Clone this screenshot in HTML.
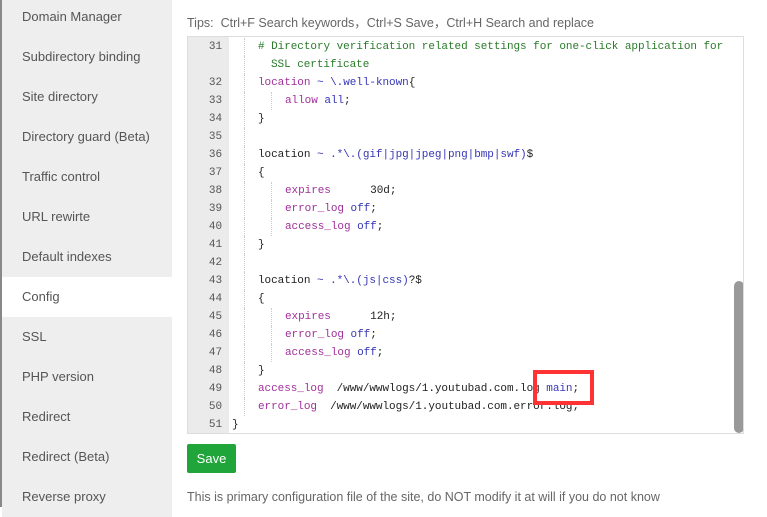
<!DOCTYPE html>
<html><head><style>
*{margin:0;padding:0;box-sizing:border-box}
body{width:767px;height:507px;overflow:hidden;background:#fff;font-family:"Liberation Sans",sans-serif;position:relative}
.edge{position:absolute;left:0;top:0;width:2px;height:507px;background:#888}
.side{position:absolute;left:2px;top:-3px;width:170px}
.side div{height:40px;line-height:40px;padding-left:20px;font-size:13px;color:#555;background:#eeeeee}
.side div.act{background:#fff}
.tips{position:absolute;left:187px;top:12px;font-size:12.5px;color:#666}
.ed{position:absolute;left:187px;top:36px;width:557px;height:398px;border:1px solid #ddd;overflow:hidden;background:#fff}
.gut{position:absolute;left:0;top:0;width:41px;height:100%;background:#ebebeb}
.code{position:absolute;left:0;top:1px;width:100%;font-family:"Liberation Mono",monospace;font-size:11px;letter-spacing:-0.05px}
.r{height:18px;line-height:18px;position:relative;white-space:pre}
.n{position:absolute;left:0;width:34px;text-align:right;color:#555}
.t{position:absolute;left:44px;color:#222}
.g{position:absolute;top:0;height:18px;border-left:1px dotted #ccc}
.k{color:#a0309a}.v{color:#3636b8}.c{color:#2a7b2a}
.sb{position:absolute;left:546px;top:244px;width:10px;height:152px;background:#999;border-radius:5px}
.box{position:absolute;left:533px;top:370px;width:61px;height:35px;border:4px solid #f33}
.btn{position:absolute;left:187px;top:444px;width:49px;height:29px;background:#20a53a;border-radius:2px;color:#fff;font-size:13px;text-align:center;line-height:29px}
.bot{position:absolute;left:187px;top:490px;font-size:12.5px;color:#666}
</style></head><body>
<div class="edge"></div>
<div class="side">
<div>Domain Manager</div><div>Subdirectory binding</div><div>Site directory</div><div>Directory guard (Beta)</div><div>Traffic control</div><div>URL rewirte</div><div>Default indexes</div><div class="act">Config</div><div>SSL</div><div>PHP version</div><div>Redirect</div><div>Redirect (Beta)</div><div>Reverse proxy</div>
</div>
<div class="tips">Tips:&nbsp; Ctrl+F Search keywords，Ctrl+S Save，Ctrl+H Search and replace</div>
<div class="ed">
<div class="gut"></div>
<div class="code">
<div class="r"><span class="n">31</span><span class="g" style="left:56px"></span><span class="t" style="left:70px"><span class="c"># Directory verification related settings for one-click application for</span></span></div>
<div class="r"><span class="g" style="left:56px"></span><span class="t" style="left:83px"><span class="c">SSL certificate</span></span></div>
<div class="r"><span class="n">32</span><span class="g" style="left:56px"></span><span class="t" style="left:70px"><span class="k">location</span> <span class="v">~ \.well-known</span>{</span></div>
<div class="r"><span class="n">33</span><span class="g" style="left:56px"></span><span class="g" style="left:83px"></span><span class="t" style="left:97px"><span class="k">allow</span> <span class="v">all</span>;</span></div>
<div class="r"><span class="n">34</span><span class="g" style="left:56px"></span><span class="t" style="left:70px">}</span></div>
<div class="r"><span class="n">35</span><span class="g" style="left:56px"></span></div>
<div class="r"><span class="n">36</span><span class="g" style="left:56px"></span><span class="t" style="left:70px">location <span class="v">~ .*\.(gif|jpg|jpeg|png|bmp|swf)</span>$</span></div>
<div class="r"><span class="n">37</span><span class="g" style="left:56px"></span><span class="t" style="left:70px">{</span></div>
<div class="r"><span class="n">38</span><span class="g" style="left:56px"></span><span class="g" style="left:83px"></span><span class="t" style="left:97px"><span class="k">expires</span>      30d;</span></div>
<div class="r"><span class="n">39</span><span class="g" style="left:56px"></span><span class="g" style="left:83px"></span><span class="t" style="left:97px"><span class="k">error_log</span> <span class="v">off</span>;</span></div>
<div class="r"><span class="n">40</span><span class="g" style="left:56px"></span><span class="g" style="left:83px"></span><span class="t" style="left:97px"><span class="k">access_log</span> <span class="v">off</span>;</span></div>
<div class="r"><span class="n">41</span><span class="g" style="left:56px"></span><span class="t" style="left:70px">}</span></div>
<div class="r"><span class="n">42</span><span class="g" style="left:56px"></span></div>
<div class="r"><span class="n">43</span><span class="g" style="left:56px"></span><span class="t" style="left:70px">location <span class="v">~ .*\.(js|css)</span>?$</span></div>
<div class="r"><span class="n">44</span><span class="g" style="left:56px"></span><span class="t" style="left:70px">{</span></div>
<div class="r"><span class="n">45</span><span class="g" style="left:56px"></span><span class="g" style="left:83px"></span><span class="t" style="left:97px"><span class="k">expires</span>      12h;</span></div>
<div class="r"><span class="n">46</span><span class="g" style="left:56px"></span><span class="g" style="left:83px"></span><span class="t" style="left:97px"><span class="k">error_log</span> <span class="v">off</span>;</span></div>
<div class="r"><span class="n">47</span><span class="g" style="left:56px"></span><span class="g" style="left:83px"></span><span class="t" style="left:97px"><span class="k">access_log</span> <span class="v">off</span>;</span></div>
<div class="r"><span class="n">48</span><span class="g" style="left:56px"></span><span class="t" style="left:70px">}</span></div>
<div class="r"><span class="n">49</span><span class="g" style="left:56px"></span><span class="t" style="left:70px"><span class="k">access_log</span>  /www/wwwlogs/1.youtubad.com.log <span class="v">main</span>;</span></div>
<div class="r"><span class="n">50</span><span class="g" style="left:56px"></span><span class="t" style="left:70px"><span class="k">error_log</span>  /www/wwwlogs/1.youtubad.com.error.log;</span></div>
<div class="r"><span class="n">51</span><span class="t">}</span></div>
</div>
<div class="sb"></div>
</div>
<div class="box"></div>
<div class="btn">Save</div>
<div class="bot">This is primary configuration file of the site, do NOT modify it at will if you do not know</div>
</body></html>
